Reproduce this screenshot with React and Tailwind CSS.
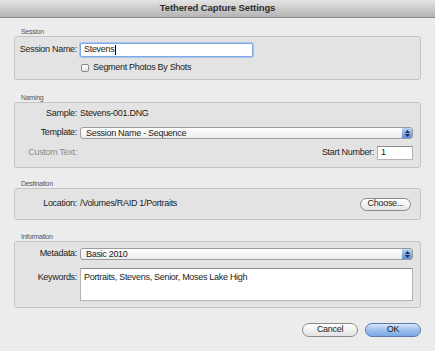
import React from 'react';

function SectionLabel({ children }) {
  return (
    <div className="h-[8px] pl-[7px] text-[7px] leading-[8px] text-[#555]">{children}</div>
  );
}

function Box({ className = '', children }) {
  return (
    <div className={`rounded-[3px] border border-[#c4c4c4] bg-[#e3e3e3] ${className}`}>
      {children}
    </div>
  );
}

function Label({ children, muted }) {
  return (
    <div className={`w-[65px] shrink-0 whitespace-nowrap pr-[3px] text-right ${muted ? 'text-[#8c8c8c]' : 'text-[#1c1c1c]'}`}>
      {children}
    </div>
  );
}

function Popup({ value }) {
  return (
    <div className="flex h-[12px] flex-1 items-center rounded-[3px] border border-[#9c9c9c] bg-gradient-to-b from-[#ffffff] to-[#ececec] pl-[5px]">
      <span className="flex-1 leading-none">{value}</span>
      <div className="flex h-[10px] w-[10px] flex-col items-center justify-center gap-[1px] rounded-r-[2px] bg-gradient-to-b from-[#b9d3f3] to-[#5d8ed8]">
        <svg width="5" height="3" viewBox="0 0 5 3"><path d="M0 3 L2.5 0 L5 3 Z" fill="#1e2e4a" /></svg>
        <svg width="5" height="3" viewBox="0 0 5 3"><path d="M0 0 L2.5 3 L5 0 Z" fill="#1e2e4a" /></svg>
      </div>
    </div>
  );
}

export default function App() {
  return (
    <div
      className="h-[351px] w-[435px] overflow-hidden bg-[#ececec] text-[9px] tracking-[-0.3px] text-[#1c1c1c]"
      style={{ fontFamily: '"Liberation Sans", Arial, sans-serif' }}
    >
      {/* Title bar */}
      <div className="flex h-[18px] items-center justify-center border-b border-[#8e8e8e] bg-gradient-to-b from-[#e4e4e4] to-[#b4b4b4] text-[9.5px] font-bold tracking-[-0.1px] text-[#2e2e2e]">
        Tethered Capture Settings
      </div>

      <div className="px-[14px]">
        {/* Session */}
        <div className="mt-[10px]">
          <SectionLabel>Session</SectionLabel>
          <Box className="h-[44px] pt-[6px]">
            <div className="flex h-[14px] items-center">
              <Label>Session Name:</Label>
              <div className="flex h-[14px] w-[173px] items-center rounded-[2px] border border-[#7fa8e4] bg-white pl-[3px] shadow-[0_0_0_1px_#a9c6ef]">
                Stevens<span className="ml-[1px] h-[10px] w-[1px] bg-black" />
              </div>
            </div>
            <div className="mt-[6px] flex h-[10px] items-center pl-[66px]">
              <div className="h-[8px] w-[8px] rounded-[2px] border border-[#8a8a8a] bg-gradient-to-b from-white to-[#e2e2e2]" />
              <span className="ml-[4px]">Segment Photos By Shots</span>
            </div>
          </Box>
        </div>

        {/* Naming */}
        <div className="mt-[14px]">
          <SectionLabel>Naming</SectionLabel>
          <Box className="h-[66px] pr-[7px] pt-[5px]">
            <div className="flex h-[12px] items-center">
              <Label>Sample:</Label>
              <span>Stevens-001.DNG</span>
            </div>
            <div className="mt-[7px] flex h-[12px] items-center">
              <Label>Template:</Label>
              <Popup value="Session Name - Sequence" />
            </div>
            <div className="mt-[7px] flex h-[14px] items-center">
              <Label muted>Custom Text:</Label>
              <div className="flex-1" />
              <span className="mr-[3px]">Start Number:</span>
              <div className="flex h-[14px] w-[36px] items-center border border-[#b4b4b4] border-t-[#8c8c8c] bg-white pl-[3px]">1</div>
            </div>
          </Box>
        </div>

        {/* Destination */}
        <div className="mt-[12px]">
          <SectionLabel>Destination</SectionLabel>
          <Box className="flex h-[32px] items-center pr-[9px]">
            <Label>Location:</Label>
            <span className="flex-1">/Volumes/RAID 1/Portraits</span>
            <div className="flex h-[13px] w-[51px] items-center justify-center rounded-full border border-[#8a8a8a] bg-gradient-to-b from-white to-[#e4e4e4]">
              Choose...
            </div>
          </Box>
        </div>

        {/* Information */}
        <div className="mt-[13px]">
          <SectionLabel>Information</SectionLabel>
          <Box className="h-[67px] pr-[7px] pt-[6px]">
            <div className="flex h-[12px] items-center">
              <Label>Metadata:</Label>
              <Popup value="Basic 2010" />
            </div>
            <div className="mt-[8px] flex">
              <div className="pt-[3px]">
                <Label>Keywords:</Label>
              </div>
              <div className="h-[33px] flex-1 border border-[#b4b4b4] border-t-[#8c8c8c] bg-white pl-[3px] pt-[2px]">
                Portraits, Stevens, Senior, Moses Lake High
              </div>
            </div>
          </Box>
        </div>

        {/* Buttons */}
        <div className="mt-[15px] flex justify-end gap-[7px]">
          <div className="flex h-[14px] w-[56px] items-center justify-center rounded-full border border-[#8a8a8a] bg-gradient-to-b from-white to-[#e2e2e2]">
            Cancel
          </div>
          <div className="flex h-[14px] w-[56px] items-center justify-center rounded-full border border-[#5b79ad] bg-gradient-to-b from-[#d9e8fb] via-[#9fc1ee] to-[#7aa9e8]">
            OK
          </div>
        </div>
      </div>
    </div>
  );
}
